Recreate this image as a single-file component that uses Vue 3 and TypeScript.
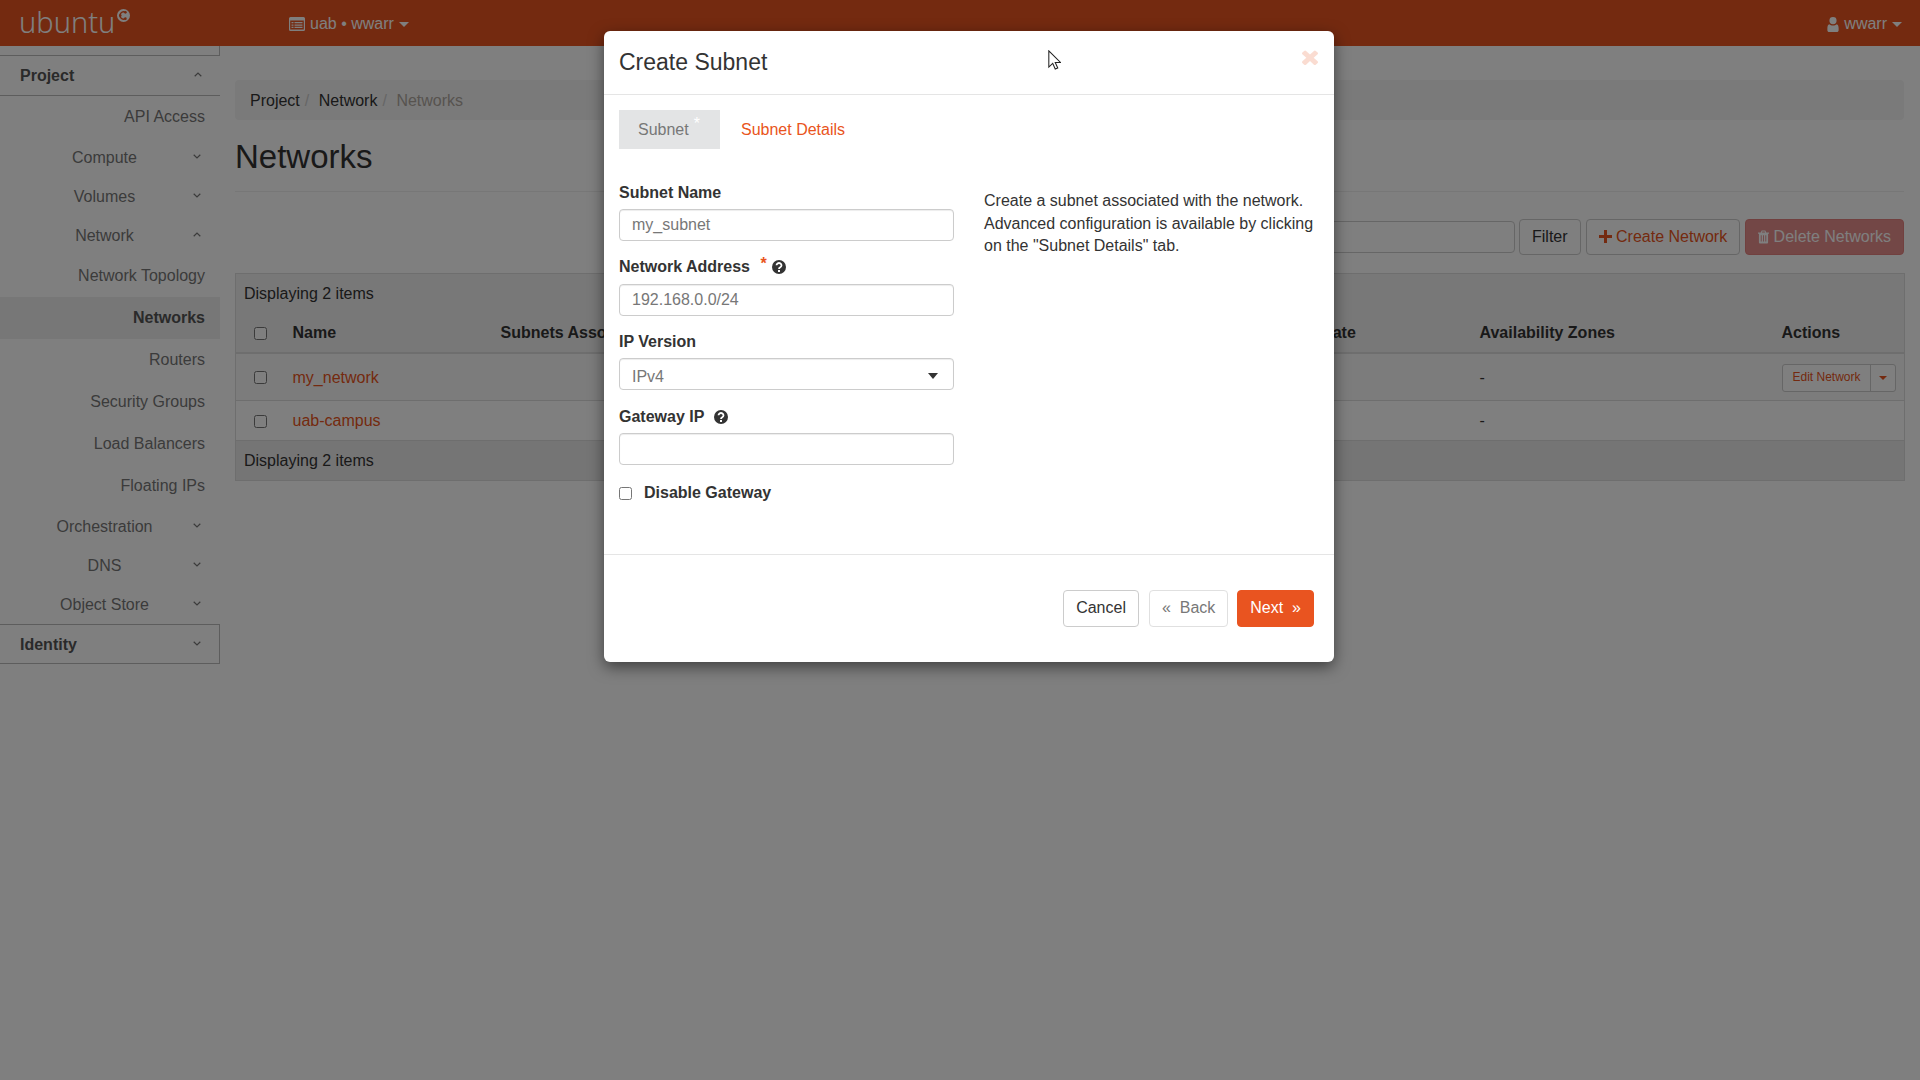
<template>
  <div class="page">
    <header class="topbar">
      <div class="logo">
        <span class="logo-text">ubuntu</span>
        <svg class="logo-mark" viewBox="0 0 24 24">
          <circle cx="12" cy="12" r="12" fill="#fff" />
          <path d="M15.5 6.2A6.7 6.7 0 1 0 15.5 17.8" fill="none" stroke="#e95420" stroke-width="2.6" />
          <circle cx="6" cy="12" r="2.4" fill="#e95420" />
          <circle cx="15.5" cy="6.2" r="2.4" fill="#e95420" />
          <circle cx="15.5" cy="17.8" r="2.4" fill="#e95420" />
        </svg>
      </div>
      <div class="top-menu">
        <svg class="list-icon" viewBox="0 0 16 14">
          <path fill="#fff" fill-rule="evenodd" d="M1.5 0h13A1.5 1.5 0 0 1 16 1.5v11a1.5 1.5 0 0 1-1.5 1.5h-13A1.5 1.5 0 0 1 0 12.5v-11A1.5 1.5 0 0 1 1.5 0zM1.2 3.5v9h13.6v-9zM2.5 5h2v1.3h-2zM5.5 5h8v1.3h-8zM2.5 7.4h2v1.3h-2zM5.5 7.4h8v1.3h-8zM2.5 9.8h2v1.3h-2zM5.5 9.8h8v1.3h-8z" />
        </svg>
        <span>uab • wwarr</span>
        <span class="caret white"></span>
      </div>
      <div class="user-menu">
        <svg class="user-icon" viewBox="0 0 12 16">
          <path fill="#fff" d="M6 0a3.8 3.8 0 0 1 3.8 3.9A3.8 3.8 0 0 1 6 7.8a3.8 3.8 0 0 1-3.8-3.9A3.8 3.8 0 0 1 6 0zM2 7.6C3 8.6 4.4 9.1 6 9.1s3-.5 4-1.5c1.3.3 2 1.7 2 4.4v2c0 1.2-.8 2-2 2H2c-1.2 0-2-.8-2-2v-2c0-2.7.7-4.1 2-4.4z" />
        </svg>
        <span>wwarr</span>
        <span class="caret white"></span>
      </div>
    </header>

    <div class="body-row">
      <aside class="sidebar">
        <div class="side-stub"></div>
        <div class="side-head open">
          <span>Project</span>
          <svg class="chev" viewBox="0 0 8 5"><path :d="chevUp" /></svg>
        </div>
        <div
          v-for="item in navItems"
          :key="item.label"
          class="side-item"
          :class="{ parent: item.parent, active: item.active }"
        >
          <span class="side-label">{{ item.label }}</span>
          <svg v-if="item.parent" class="chev" viewBox="0 0 8 5">
            <path :d="item.open ? chevUp : chevDown" />
          </svg>
        </div>
        <div class="side-head boxed">
          <span>Identity</span>
          <svg class="chev" viewBox="0 0 8 5"><path :d="chevDown" /></svg>
        </div>
      </aside>

      <main class="content">
        <div class="breadcrumb">
          <span>Project</span><i>/</i><span>Network</span><i>/</i><span class="current">Networks</span>
        </div>
        <div class="page-header">
          <h1>Networks</h1>
        </div>

        <div class="actions-row">
          <input class="filter-input" type="text" />
          <button class="btn">Filter</button>
          <button class="btn link">
            <svg class="btn-icon" viewBox="0 0 13 13">
              <path fill="#e95420" d="M5 0h3v5h5v3H8v5H5V8H0V5h5z" />
            </svg>
            Create Network
          </button>
          <button class="btn danger">
            <svg class="btn-icon trash" viewBox="0 0 12 14">
              <path fill="#fff" fill-rule="evenodd" d="M4 0h4l1 2h3v1.5h-1V13c0 .6-.4 1-1 1H2c-.6 0-1-.4-1-1V3.5H0V2h3zM4.700 1l-.4 1h3.400l-.4-1zM3 5v7h1V5zM5.500 5v7h1V5zM8 5v7h1V5z" />
            </svg>
            Delete Networks
          </button>
        </div>

        <table class="net-table">
          <colgroup>
            <col v-for="w in colWidths" :key="w.name" :style="{ width: w.px + 'px' }" />
          </colgroup>
          <thead>
            <tr class="caption-row">
              <td colspan="9">Displaying 2 items</td>
            </tr>
            <tr class="head-row">
              <th><input class="check" type="checkbox" /></th>
              <th v-for="w in colWidths.slice(1)" :key="w.name">{{ w.name }}</th>
            </tr>
          </thead>
          <tbody>
            <tr v-for="net in networks" :key="net.name" :class="{ tall: net.editable }">
              <td class="check-cell"><input class="check" type="checkbox" /></td>
              <td><a class="net-link">{{ net.name }}</a></td>
              <td>{{ net.subnets }}</td>
              <td>{{ net.shared }}</td>
              <td>{{ net.external }}</td>
              <td>Active</td>
              <td>UP</td>
              <td>-</td>
              <td class="action-cell">
                <div v-if="net.editable" class="split-btn">
                  <span class="split-main">Edit Network</span>
                  <span class="split-side"><span class="caret small"></span></span>
                </div>
              </td>
            </tr>
          </tbody>
          <tfoot>
            <tr class="foot-row">
              <td colspan="9">Displaying 2 items</td>
            </tr>
          </tfoot>
        </table>
      </main>
    </div>

    <div class="backdrop"></div>

    <div class="modal">
      <div class="modal-head">
        <h3>Create Subnet</h3>
        <svg class="close" viewBox="302 238 1188 1316" preserveAspectRatio="none">
          <path d="M1490 1322q0 40-28 68l-136 136q-28 28-68 28t-68-28l-294-294-294 294q-28 28-68 28t-68-28l-136-136q-28-28-28-68t28-68l294-294-294-294q-28-28-28-68t28-68l136-136q28-28 68-28t68 28l294 294 294-294q28-28 68-28t68 28l136 136q28 28 28 68t-28 68l-294 294 294 294q28 28 28 68z" />
        </svg>
      </div>

      <div class="modal-body">
        <div class="tabs">
          <div class="tab active">Subnet<sup>*</sup></div>
          <div class="tab">Subnet Details</div>
        </div>

        <div class="form-row">
          <form class="form-col" @submit.prevent>
            <div class="field">
              <label>Subnet Name</label>
              <input type="text" placeholder="my_subnet" />
            </div>
            <div class="field addr">
              <label>Network Address <span class="req">*</span>
                <svg class="help" viewBox="0 0 14 14">
                  <circle cx="7" cy="7" r="7" fill="#333" />
                  <path d="M4.5 5.3a2.5 2.3 0 1 1 3.8 2c-.9.5-1.3.9-1.3 1.7" fill="none" stroke="#fff" stroke-width="1.8" />
                  <rect x="6" y="10" width="2" height="2" fill="#fff" />
                </svg>
              </label>
              <input type="text" placeholder="192.168.0.0/24" />
            </div>
            <div class="field">
              <label>IP Version</label>
              <div class="select-wrap">
                <select>
                  <option>IPv4</option>
                  <option>IPv6</option>
                </select>
                <span class="caret dark"></span>
              </div>
            </div>
            <div class="field">
              <label>Gateway IP
                <svg class="help wide" viewBox="0 0 14 14">
                  <circle cx="7" cy="7" r="7" fill="#333" />
                  <path d="M4.5 5.3a2.5 2.3 0 1 1 3.8 2c-.9.5-1.3.9-1.3 1.7" fill="none" stroke="#fff" stroke-width="1.8" />
                  <rect x="6" y="10" width="2" height="2" fill="#fff" />
                </svg>
              </label>
              <input type="text" />
            </div>
            <label class="check-row">
              <input class="check" type="checkbox" />
              Disable Gateway
            </label>
          </form>
          <p class="help-text">
            Create a subnet associated with the network. Advanced configuration is available by clicking on the "Subnet Details" tab.
          </p>
        </div>
      </div>

      <div class="modal-foot">
        <button class="btn cancel">Cancel</button>
        <button class="btn muted">«&nbsp; Back</button>
        <button class="btn primary">Next &nbsp;»</button>
      </div>
    </div>

    <svg class="cursor" viewBox="0 0 12 19">
      <path d="M.6.8v15.4l3.7-3.5 2.4 5.4 2.4-1-2.4-5.3h5z" fill="#fff" stroke="#222" stroke-width="1" />
    </svg>
  </div>
</template>

<script setup lang="ts">
interface NavItem {
  label: string;
  parent?: boolean;
  open?: boolean;
  active?: boolean;
}

const chevDown = 'M.7.8 4 4 7.3.8';
const chevUp = 'M.7 4.2 4 1l3.3 3.2';

const navItems: NavItem[] = [
  { label: 'API Access' },
  { label: 'Compute', parent: true },
  { label: 'Volumes', parent: true },
  { label: 'Network', parent: true, open: true },
  { label: 'Network Topology' },
  { label: 'Networks', active: true },
  { label: 'Routers' },
  { label: 'Security Groups' },
  { label: 'Load Balancers' },
  { label: 'Floating IPs' },
  { label: 'Orchestration', parent: true },
  { label: 'DNS', parent: true },
  { label: 'Object Store', parent: true },
];

const colWidths = [
  { name: '', px: 49 },
  { name: 'Name', px: 208 },
  { name: 'Subnets Associated', px: 300 },
  { name: 'Shared', px: 150 },
  { name: 'External', px: 150 },
  { name: 'Status', px: 162 },
  { name: 'Admin State', px: 217 },
  { name: 'Availability Zones', px: 302 },
  { name: 'Actions', px: 131 },
];

const networks = [
  { name: 'my_network', subnets: '', shared: 'No', external: 'No', editable: true },
  { name: 'uab-campus', subnets: '', shared: 'Yes', external: 'No', editable: false },
];
</script>

<style scoped>
.page {
  position: relative;
  min-height: 1080px;
  background: #fff;
  font-family: "Liberation Sans", Arial, sans-serif;
  font-size: 16px;
  line-height: 1.43;
  color: #333;
  overflow: hidden;
}
.topbar {
  height: 46px;
  background: #e95420;
  display: flex;
  align-items: center;
  color: #fff;
}
.logo {
  width: 289px;
  padding-left: 19px;
  box-sizing: border-box;
  display: flex;
  align-items: flex-start;
  height: 46px;
}
.logo-text {
  font-family: "Noto Sans", "Open Sans", sans-serif;
  font-weight: 300;
  font-size: 29px;
  line-height: 44px;
}
.logo-mark {
  width: 13px;
  height: 13px;
  margin: 9px 0 0 2px;
}
.top-menu {
  display: flex;
  align-items: center;
  padding-top: 2px;
}
.list-icon {
  width: 16px;
  height: 14px;
  margin-right: 5px;
}
.user-menu {
  margin-left: auto;
  padding: 2px 18px 0 0;
  display: flex;
  align-items: center;
}
.user-icon {
  width: 12px;
  height: 15px;
  margin-right: 5px;
}
.caret {
  display: inline-block;
  width: 0;
  height: 0;
  border-left: 5px solid transparent;
  border-right: 5px solid transparent;
  border-top: 5px solid #333;
}
.caret.white {
  border-top-color: #fff;
  margin-left: 5px;
}
.body-row {
  display: flex;
  align-items: flex-start;
}
.sidebar {
  width: 220px;
  flex: none;
  color: #777;
}
.side-stub {
  height: 10px;
  border-right: 1px solid #bbb;
  border-bottom: 1px solid #bbb;
  box-sizing: border-box;
}
.side-head {
  height: 40px;
  box-sizing: border-box;
  display: flex;
  align-items: center;
  justify-content: space-between;
  padding: 1px 18px 0 20px;
  font-weight: 700;
  color: #555;
  border-bottom: 1px solid #bbb;
}
.side-head.boxed {
  height: 40px;
  padding-top: 3px;
  border: 1px solid #bbb;
  border-left: none;
}
.side-item {
  height: 42px;
  box-sizing: border-box;
  display: flex;
  align-items: center;
  justify-content: flex-end;
  padding: 1px 15px 0 0;
}
.side-item.parent {
  height: 39px;
  justify-content: flex-start;
  padding-right: 0;
}
.side-item.parent .side-label {
  width: 209px;
  text-align: center;
}
.side-item.parent .chev {
  margin-left: -16px;
}
.side-item.active {
  background: #eee;
  font-weight: 700;
  color: #555;
}
.chev {
  width: 8px;
  height: 5px;
  margin-top: -4px;
  flex: none;
}
.chev path {
  fill: none;
  stroke: #777;
  stroke-width: 1.2;
}
.content {
  flex: 1;
  min-width: 0;
  padding: 0 16px 0 15px;
}
.breadcrumb {
  margin-top: 34px;
  height: 40px;
  box-sizing: border-box;
  background: #f5f5f5;
  border-radius: 4px;
  padding: 2px 15px 0;
  display: flex;
  align-items: center;
  color: #333;
}
.breadcrumb i {
  font-style: normal;
  color: #ccc;
  margin: 0 9.5px 0 5px;
}
.breadcrumb .current {
  color: #aea79f;
}
.page-header {
  height: 72px;
  border-bottom: 1px solid #eee;
  box-sizing: border-box;
  padding-top: 18px;
}
h1 {
  margin: 0;
  font-size: 33px;
  font-weight: 400;
  line-height: 38px;
  color: #333;
}
.actions-row {
  margin-top: 27px;
  display: flex;
  justify-content: flex-end;
  align-items: center;
  gap: 5px;
}
.filter-input {
  width: 240px;
  height: 32px;
  box-sizing: border-box;
  margin-right: -1px;
  border: 1px solid #ccc;
  border-radius: 4px;
}
.btn {
  height: 36px;
  box-sizing: border-box;
  padding: 0 12px;
  background: #fff;
  border: 1px solid #ccc;
  border-radius: 4px;
  font: inherit;
  color: #333;
}
.btn.link {
  color: #e95420;
}
.btn.danger {
  background: #d9534f;
  border-color: #d43f3a;
  color: #fff;
  opacity: 0.65;
}
.btn-icon {
  width: 13px;
  height: 13px;
  vertical-align: -1px;
}
.btn-icon.trash {
  width: 11px;
  height: 14px;
  vertical-align: -2px;
}
.net-table {
  margin-top: 18px;
  width: 1669px;
  table-layout: fixed;
  border-collapse: collapse;
  border: 1px solid #ddd;
}
.net-table td,
.net-table th {
  padding: 0 8px;
  text-align: left;
  white-space: nowrap;
  overflow: hidden;
}
.caption-row td {
  height: 37px;
  padding-top: 2px;
  background: #f1f1f1;
}
.net-table .head-row th {
  height: 37px;
  padding-top: 2px;
  background: #f1f1f1;
  border-bottom: 2px solid #ddd;
  font-weight: 700;
  color: #333;
}
.head-row th:first-child {
  text-align: center;
}
tbody tr {
  height: 40px;
  border-top: 1px solid #ddd;
  background: #fff;
}
tbody tr.tall {
  height: 47px;
  background: #f9f9f9;
}
.net-table tbody td {
  padding-top: 2px;
}
.net-table tbody tr.tall td {
  padding-top: 4px;
}
.net-table tbody td.check-cell {
  padding-top: 3px;
  text-align: center;
}
.net-table tbody tr.tall td.check-cell {
  padding-top: 1px;
}
.net-table tbody tr.tall td.action-cell {
  padding-top: 2px;
}
.net-link {
  color: #e95420;
}
.net-table .foot-row td {
  height: 37px;
  padding-top: 2px;
  background: #ebebeb;
  border-top: 1px solid #ddd;
}
.check {
  width: 13px;
  height: 13px;
  margin: 0;
  vertical-align: middle;
}
.split-btn {
  display: flex;
  width: 114px;
  height: 28px;
  margin-left: 0;
  box-sizing: border-box;
  border: 1px solid #ccc;
  border-radius: 3px;
  font-size: 12px;
  color: #e95420;
  background: #fff;
}
.split-main {
  flex: 1;
  display: flex;
  align-items: center;
  padding-left: 10px;
}
.split-side {
  width: 24px;
  border-left: 1px solid #ccc;
  display: flex;
  align-items: center;
  justify-content: center;
}
.caret.small {
  border-left-width: 4px;
  border-right-width: 4px;
  border-top: 4px solid #e95420;
}
.backdrop {
  position: absolute;
  inset: 0;
  background: rgba(0, 0, 0, 0.5);
}
.modal {
  position: absolute;
  top: 31px;
  left: 604px;
  width: 730px;
  height: 631px;
  background: #fff;
  border-radius: 6px;
  box-shadow: 0 5px 15px rgba(0, 0, 0, 0.5);
  display: flex;
  flex-direction: column;
}
.modal-head {
  height: 64px;
  flex: none;
  box-sizing: border-box;
  padding: 0 15px;
  border-bottom: 1px solid #e5e5e5;
  display: flex;
  align-items: center;
  justify-content: space-between;
}
h3 {
  margin: 0;
  font-size: 23px;
  font-weight: 400;
  color: #333;
}
.close {
  width: 16px;
  height: 16px;
  align-self: flex-start;
  margin: 18px 1px 0 0;
  fill: #e95420;
  opacity: 0.2;
}
.modal-body {
  flex: 1;
  padding: 15px 15px 0;
}
.tabs {
  display: flex;
  gap: 21px;
}
.tab {
  height: 39px;
  line-height: 39px;
  color: #e95420;
}
.tab.active {
  width: 101px;
  box-sizing: border-box;
  padding-left: 19px;
  background: #e3e4e5;
  color: #777;
}
.tab sup {
  color: #fff;
  font-size: 16px;
  line-height: 0;
  margin-left: 5px;
}
.form-row {
  display: flex;
  margin-top: 32px;
}
.form-col {
  width: 335px;
  flex: none;
}
.field {
  margin-bottom: 14.5px;
}
.field label {
  display: block;
  height: 23px;
  line-height: 23px;
  font-weight: 700;
  color: #333;
  white-space: nowrap;
}
.field.addr label {
  margin-top: -1px;
}
.field.addr input {
  margin-top: 6px;
}
.req {
  color: #e95420;
  margin-left: 6px;
  position: relative;
  top: -3px;
}
.help {
  width: 14px;
  height: 14px;
  margin-left: 5px;
  vertical-align: -2px;
}
.help.wide {
  margin-left: 5px;
}
.field input,
.field select {
  display: block;
  width: 100%;
  height: 32px;
  box-sizing: border-box;
  margin-top: 5px;
  padding: 0 12px;
  font: inherit;
  color: #777;
  background: #fff;
  border: 1px solid #ccc;
  border-radius: 4px;
  box-shadow: inset 0 1px 1px rgba(0, 0, 0, 0.075);
}
.field input::placeholder {
  color: #777;
  opacity: 1;
}
.field select {
  appearance: none;
  padding-top: 7px;
}
.select-wrap {
  position: relative;
}
.caret.dark {
  position: absolute;
  right: 16px;
  top: 15px;
  border-top-width: 6px;
}
.check-row {
  display: flex;
  align-items: center;
  gap: 12px;
  font-weight: 700;
  color: #333;
  height: 23px;
  margin-top: 17.5px;
}
.help-text {
  margin: 9px 0 0 30px;
  width: 340px;
  line-height: 22.5px;
  color: #333;
}
.modal-foot {
  height: 108px;
  flex: none;
  box-sizing: border-box;
  border-top: 1px solid #e5e5e5;
  padding: 35px 20px 0 0;
  display: flex;
  justify-content: flex-end;
  align-items: flex-start;
  gap: 9px;
}
.modal-foot .btn {
  height: 37px;
}
.modal-foot .cancel {
  margin-right: 1px;
}
.btn.muted {
  color: #777;
  border-color: #e0e0e0;
}
.btn.primary {
  background: #e95420;
  border-color: #e95420;
  color: #fff;
}
.cursor {
  position: absolute;
  left: 1048px;
  top: 50px;
  width: 13px;
  height: 20px;
}
</style>

<style>
body {
  margin: 0;
}
</style>
